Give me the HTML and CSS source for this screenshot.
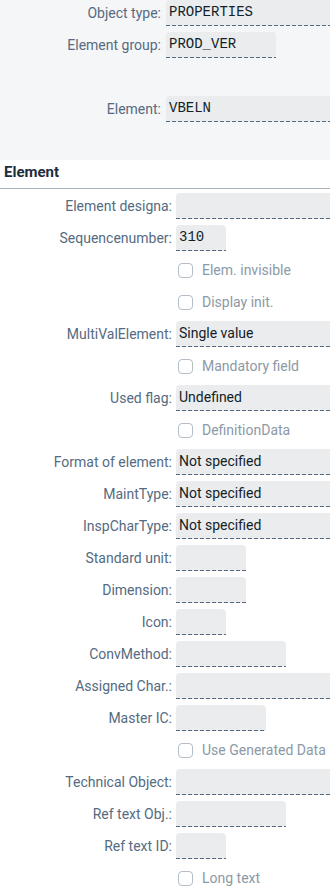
FILE: index.html
```html
<!DOCTYPE html>
<html>
  <head>
    <meta charset="UTF-8">
    <meta name="viewport" content="width=device-width, initial-scale=1.0">
    <title>Element</title>
    <link rel="stylesheet" href="styles.css">
  </head>
  <body>
    <div class="head-area">
      <div class="row top">
        <span class="label">Object type:</span>
        <span class="field full mono">PROPERTIES</span>
      </div>
      <div class="row top">
        <span class="label">Element group:</span>
        <span class="field mono w110">PROD_VER</span>
      </div>
      <div class="row top"></div>
      <div class="row top">
        <span class="label">Element:</span>
        <span class="field full mono">VBELN</span>
      </div>
    </div>

    <div class="section-title">Element</div>

    <div class="form">
      <div class="row">
        <span class="label">Element designa:</span>
        <span class="field full"></span>
      </div>
      <div class="row">
        <span class="label">Sequencenumber:</span>
        <span class="field mono w50">310</span>
      </div>
      <div class="row">
        <span class="label"></span>
        <span class="check"><span class="box"></span>Elem. invisible</span>
      </div>
      <div class="row">
        <span class="label"></span>
        <span class="check"><span class="box"></span>Display init.</span>
      </div>
      <div class="row">
        <span class="label">MultiValElement:</span>
        <span class="field full">Single value</span>
      </div>
      <div class="row">
        <span class="label"></span>
        <span class="check"><span class="box"></span>Mandatory field</span>
      </div>
      <div class="row">
        <span class="label">Used flag:</span>
        <span class="field full">Undefined</span>
      </div>
      <div class="row">
        <span class="label"></span>
        <span class="check"><span class="box"></span>DefinitionData</span>
      </div>
      <div class="row">
        <span class="label">Format of element:</span>
        <span class="field full">Not specified</span>
      </div>
      <div class="row">
        <span class="label">MaintType:</span>
        <span class="field full">Not specified</span>
      </div>
      <div class="row">
        <span class="label">InspCharType:</span>
        <span class="field full">Not specified</span>
      </div>
      <div class="row">
        <span class="label">Standard unit:</span>
        <span class="field w70"></span>
      </div>
      <div class="row">
        <span class="label">Dimension:</span>
        <span class="field w70"></span>
      </div>
      <div class="row">
        <span class="label">Icon:</span>
        <span class="field w50"></span>
      </div>
      <div class="row">
        <span class="label">ConvMethod:</span>
        <span class="field w110"></span>
      </div>
      <div class="row">
        <span class="label">Assigned Char.:</span>
        <span class="field full"></span>
      </div>
      <div class="row">
        <span class="label">Master IC:</span>
        <span class="field w90"></span>
      </div>
      <div class="row">
        <span class="label"></span>
        <span class="check"><span class="box"></span>Use Generated Data</span>
      </div>
      <div class="row">
        <span class="label">Technical Object:</span>
        <span class="field full"></span>
      </div>
      <div class="row">
        <span class="label">Ref text Obj.:</span>
        <span class="field w110"></span>
      </div>
      <div class="row">
        <span class="label">Ref text ID:</span>
        <span class="field w50"></span>
      </div>
      <div class="row">
        <span class="label"></span>
        <span class="check"><span class="box"></span>Long text</span>
      </div>
    </div>
  </body>
</html>
```

FILE: styles.css
```css
body {
  margin: 0;
  background-color: #fff;
  font-family: Roboto, "Noto Sans", sans-serif;
  font-size: 14px;
  color: #1d2d3e;
  overflow: hidden;
}

.head-area {
  background-color: #f5f6f7;
  margin-top: -3px;
  padding-bottom: 35px;
}

.row {
  display: flex;
  align-items: center;
  height: 32px;
  white-space: nowrap;
}

.label {
  flex: 0 0 176px;
  text-align: right;
  padding-right: 4px;
  box-sizing: border-box;
  color: #556b82;
}

.top .label {
  flex-basis: 166px;
  padding-right: 5px;
}

.field {
  flex: 0 0 auto;
  box-sizing: border-box;
  height: 26px;
  line-height: 25px;
  padding: 0 3px;
  background-color: #eaecee;
  border-radius: 4px 4px 0 0;
  background-image: repeating-linear-gradient(90deg, #556b82 0 4px, transparent 4px 6px);
  background-size: 100% 1px;
  background-position: 0 100%;
  background-repeat: no-repeat;
  color: #131e29;
}

.mono {
  font-family: "Liberation Mono", "DejaVu Sans Mono", monospace;
  font-size: 14px;
}

.full {
  flex: 1 1 auto;
  border-radius: 4px 0 0 0;
}

.w50 { width: 50px; }
.w70 { width: 70px; }
.w90 { width: 90px; }
.w110 { width: 110px; }

.section-title {
  height: 28px;
  line-height: 24px;
  padding-left: 4px;
  font-weight: bold;
  font-size: 15px;
  color: #1d2d3e;
  border-bottom: 1px solid #a9b4be;
  margin-bottom: 1px;
}

.check {
  display: flex;
  align-items: center;
  color: #8c99a6;
  padding-left: 2px;
}

.box {
  width: 15px;
  height: 15px;
  box-sizing: border-box;
  border: 1px solid #b5bdc5;
  border-radius: 4px;
  background-color: #fff;
  margin-right: 9px;
}
```
